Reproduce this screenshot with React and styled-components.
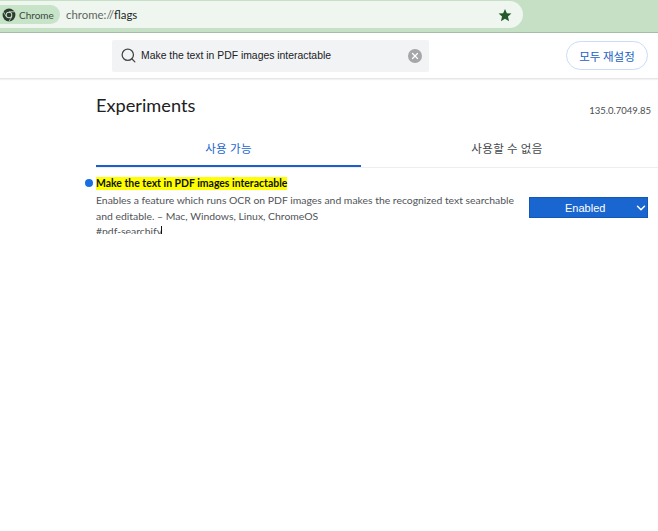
import React from "react";
import styled, { createGlobalStyle } from "styled-components";
import { Search, ChevronDown, X } from "lucide-react";

const GlobalStyle = createGlobalStyle`
  html, body {
    margin: 0;
    padding: 0;
    background: #fff;
  }
  body {
    width: 658px;
    height: 531px;
    overflow: hidden;
    font-family: Lato, "Noto Sans", "Noto Sans CJK KR", sans-serif;
  }
`;

const TopBar = styled.div`
  height: 33px;
  box-sizing: border-box;
  padding-top: 1px;
  background: #c5e0c5;
  border-bottom: 1px solid #a5bda6;
`;
const Omnibox = styled.div`
  display: flex;
  align-items: center;
  width: 523px;
  height: 27px;
  box-sizing: border-box;
  padding: 0 11px 0 0;
  background: #eff6f0;
  border-radius: 0 14px 14px 0;
`;
const Chip = styled.div`
  display: flex;
  align-items: center;
  gap: 3px;
  width: 60px;
  height: 19px;
  box-sizing: border-box;
  padding-left: 2px;
  background: #c7e3c8;
  border-radius: 0 10px 10px 0;
  font-size: 10px;
  color: #3c4a3e;
`;
const Url = styled.div`
  margin-left: 6px;
  flex: 1;
  font-size: 11.4px;
  color: #5b665d;
  span {
    color: #1c261e;
  }
`;
const Header = styled.div`
  display: flex;
  align-items: center;
  justify-content: space-between;
  height: 46px;
  box-sizing: border-box;
  padding: 0 10px 0 112px;
  border-bottom: 1px solid #e6e6e6;
  box-shadow: 0 1px 1px #f2f2f2;
`;
const SearchBox = styled.div`
  display: flex;
  align-items: center;
  width: 317px;
  height: 32px;
  box-sizing: border-box;
  padding: 0 7px 0 8px;
  background: #f1f3f4;
  border-radius: 2px;
  color: #444;
`;
const SearchText = styled.div`
  flex: 1;
  margin-left: 4px;
  font-family: "Liberation Sans", sans-serif;
  font-size: 10.4px;
  color: #202124;
`;
const ClearButton = styled.div`
  display: flex;
  align-items: center;
  justify-content: center;
  width: 14px;
  height: 14px;
  border-radius: 50%;
  background: #a5a6a8;
  color: #fff;
`;
const ResetButton = styled.button`
  width: 82px;
  height: 29px;
  padding: 0;
  background: #fff;
  border: 1px solid #c9dcf8;
  border-radius: 15px;
  font-family: "Noto Sans CJK KR", sans-serif;
  font-size: 11.5px;
  color: #1a5fc4;
`;
const Main = styled.main`
  height: 155px;
  overflow: hidden;
  padding-left: 96px;
`;
const TitleRow = styled.div`
  display: flex;
  align-items: flex-end;
  justify-content: space-between;
  height: 39px;
  box-sizing: border-box;
  padding-right: 7px;
`;
const PageTitle = styled.h1`
  margin: 0 0 1px;
  font-size: 18.2px;
  line-height: 24px;
  font-weight: 400;
  color: #202124;
`;
const Version = styled.div`
  font-size: 9.5px;
  line-height: 14px;
  color: #4a4d50;
`;
const Tabs = styled.div`
  display: flex;
  margin-top: 13px;
  height: 37px;
  box-sizing: border-box;
  border-bottom: 1px solid #eeeeee;
`;
const Tab = styled.div`
  display: flex;
  justify-content: center;
  align-items: center;
  box-sizing: border-box;
  width: ${(props) => props.width}px;
  height: 36px;
  font-family: "Noto Sans CJK KR", sans-serif;
  font-size: 11.5px;
  letter-spacing: 0.35px;
  color: ${(props) => (props.active ? "#1a66d0" : "#45484b")};
  border-bottom: 2px solid ${(props) => (props.active ? "#1a5fd0" : "transparent")};
`;
const Flag = styled.div`
  display: flex;
  justify-content: space-between;
  padding: 9px 10px 0 0;
`;
const FlagBody = styled.div`
  width: 424px;
`;
const FlagTitle = styled.div`
  position: relative;
  width: fit-content;
  height: 13px;
  line-height: 13px;
  font-size: 10.45px;
  font-weight: 700;
  color: #111;
  background: #ffff00;
  &::before {
    content: "";
    position: absolute;
    left: -11px;
    top: 2px;
    width: 8px;
    height: 8px;
    border-radius: 50%;
    background: #1a6fe0;
  }
`;
const Description = styled.div`
  margin-top: 3px;
  font-size: 10.4px;
  line-height: 15.5px;
  color: #505358;
`;
const FlagId = styled.div`
  position: relative;
  width: fit-content;
  font-size: 10.4px;
  line-height: 15.5px;
  color: #505358;
  &::after {
    content: "";
    position: absolute;
    right: 0;
    top: 2px;
    width: 1px;
    height: 11px;
    background: #111;
  }
`;
const Select = styled.div`
  display: flex;
  align-items: center;
  width: 119px;
  height: 21px;
  margin-top: 20px;
  box-sizing: border-box;
  padding: 0 0 0 35px;
  background: #1a66d0;
  border: 1px solid #1557b5;
  color: #fff;
  font-family: "Liberation Sans", sans-serif;
  font-size: 11px;
  span {
    flex: 1;
  }
  svg {
    margin-right: -1px;
  }
`;

const ChromeLogo = () => (
  <svg width="14" height="14" viewBox="0 0 24 24">
    <circle cx="12" cy="12" r="11" fill="#2d3a30" />
    <circle cx="12" cy="12" r="5.6" fill="#c7e3c8" />
    <circle cx="12" cy="12" r="4" fill="#2d3a30" />
    <path d="M12 6.4h9.4M7.1 14.8 2.5 6.6M16.9 14.8 12 23" stroke="#c7e3c8" strokeWidth="1.3" fill="none" />
  </svg>
);

const StarIcon = () => (
  <svg width="14" height="14" viewBox="0 0 24 24">
    <path d="M12 1.5l3.2 7.3 7.8.7-5.9 5.2 1.8 7.8L12 18.4l-6.9 4.1 1.8-7.8L1 9.5l7.8-.7z" fill="#24592b" />
  </svg>
);

export default function App() {
  return (
    <>
      <GlobalStyle />
      <TopBar>
        <Omnibox>
          <Chip>
            <ChromeLogo />
            Chrome
          </Chip>
          <Url>
            chrome://<span>flags</span>
          </Url>
          <StarIcon />
        </Omnibox>
      </TopBar>
      <Header>
        <SearchBox>
          <Search size={17} strokeWidth={1.8} />
          <SearchText>Make the text in PDF images interactable</SearchText>
          <ClearButton>
            <X size={10} strokeWidth={3} />
          </ClearButton>
        </SearchBox>
        <ResetButton>모두 재설정</ResetButton>
      </Header>
      <Main>
        <TitleRow>
          <PageTitle>Experiments</PageTitle>
          <Version>135.0.7049.85</Version>
        </TitleRow>
        <Tabs>
          <Tab active width={265}>사용 가능</Tab>
          <Tab width={292}>사용할 수 없음</Tab>
        </Tabs>
        <Flag>
          <FlagBody>
            <FlagTitle>Make the text in PDF images interactable</FlagTitle>
            <Description>
              Enables a feature which runs OCR on PDF images and makes the recognized text searchable and editable. – Mac, Windows, Linux, ChromeOS
            </Description>
            <FlagId>#pdf-searchify</FlagId>
          </FlagBody>
          <Select>
            <span>Enabled</span>
            <ChevronDown size={14} strokeWidth={2.5} />
          </Select>
        </Flag>
      </Main>
    </>
  );
}
